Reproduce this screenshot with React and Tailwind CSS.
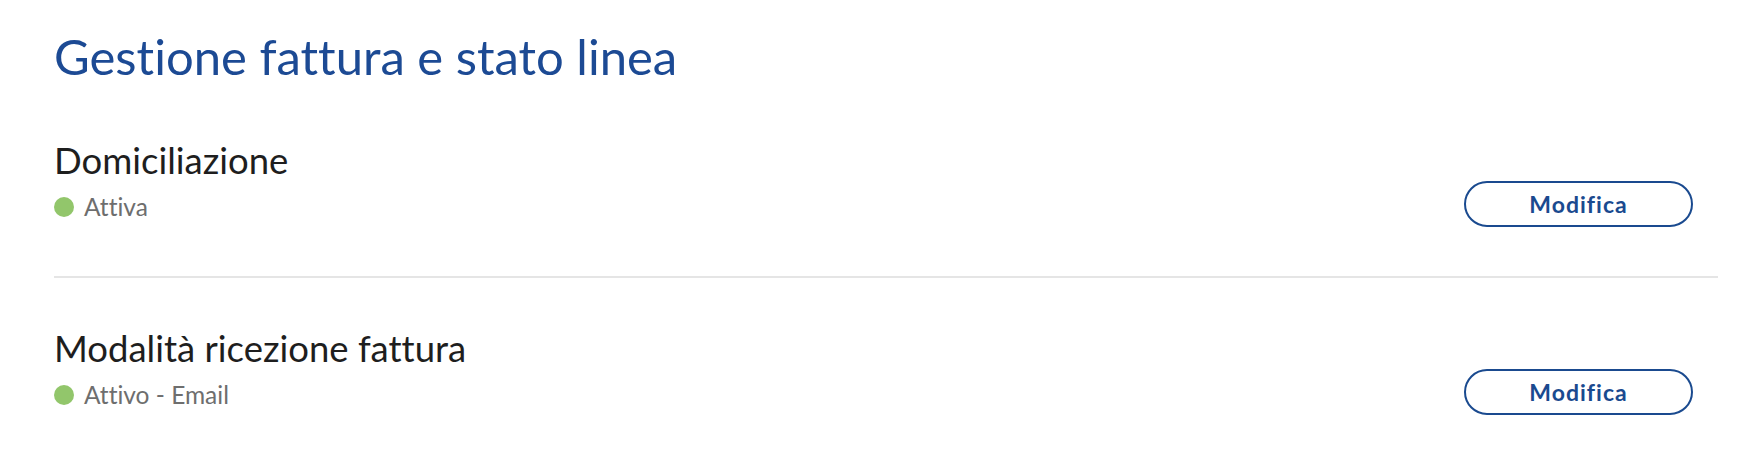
const rows = [
  { title: 'Domiciliazione', status: 'Attiva' },
  { title: 'Modalità ricezione fattura', status: 'Attivo - Email' },
]

function StatusRow({ title, status, last }) {
  return (
    <div className={last ? 'pt-[48px]' : 'pt-[54px] pb-[49px] border-b-2 border-[#e5e5e5]'}>
      <div className="flex items-end justify-between pr-[25px]">
        <div>
          <h2 className="text-[36.5px] leading-[44px] text-[#1e1e1e]">{title}</h2>
          <div className="flex items-center gap-[10px] mt-[5px]">
            <span className="w-[20px] h-[20px] shrink-0 rounded-full bg-[#92c66b]" />
            <span className="text-[24.5px] leading-[40px] text-[#6e6e6e]">{status}</span>
          </div>
        </div>
        <button className="w-[229px] h-[46px] rounded-full border-2 border-[#1a4a8f] text-[#1a4a8f] text-[23px] font-bold tracking-[1px]">
          Modifica
        </button>
      </div>
    </div>
  )
}

export default function App() {
  return (
    <div
      className="w-full min-h-[460px] bg-white pl-[54px] pr-[28px] pt-[28px] [font-variant-ligatures:none]"
      style={{ fontFamily: 'Lato, "Open Sans", sans-serif' }}
    >
      <h1 className="text-[49px] leading-[56px] text-[#1c4a94]">Gestione fattura e stato linea</h1>
      {rows.map((r, i) => (
        <StatusRow key={r.title} {...r} last={i === rows.length - 1} />
      ))}
    </div>
  )
}
